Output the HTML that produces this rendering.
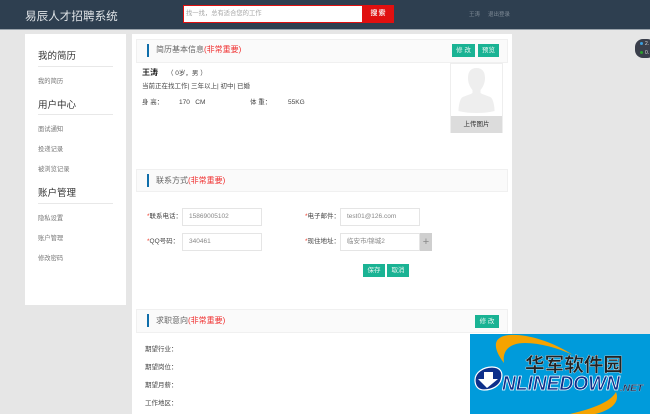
<!DOCTYPE html>
<html lang="zh"><head><meta charset="utf-8"><title>易辰人才招聘系统</title>
<style>
html,body{margin:0;padding:0;background:#e6e6e6}
body{width:650px;height:414px;overflow:hidden;position:relative;font-family:"Liberation Sans","Noto Sans CJK SC",sans-serif;color:#333}
#w{position:absolute;left:0;top:0;width:650px;height:414px;overflow:hidden;background:#e6e6e6;filter:blur(.3px)}
.a{position:absolute;white-space:nowrap}
.t{position:absolute;white-space:nowrap;line-height:12px}
.nav{font-size:6.3px;color:#777;left:38px}
.h{font-size:9.5px;color:#333;left:38px;line-height:14px}
.ln{position:absolute;left:38px;width:75px;height:1px;background:#e8e8e8}
.sec{position:absolute;left:136px;width:370px;background:#fafafa;border:1px solid #f0f0f0}
.bar{position:absolute;left:146.5px;width:2.5px;background:#0f6eaa}
.st{position:absolute;left:156px;font-size:8px;color:#666;white-space:nowrap;line-height:12px}
.st b{font-weight:normal;color:#f03030}
.btn{position:absolute;background:#1ab394;color:#e8f5f0;font-size:6.5px;text-align:center;line-height:13px;height:13px}
.lab{font-size:6.5px;color:#444}
.lab i{font-style:normal;color:#f04030}
.inp{position:absolute;box-sizing:border-box;width:80px;background:#fff;border:1px solid #e5e5e5;font-size:6.5px;color:#888;padding-left:6px;height:18px;line-height:16px;white-space:nowrap}
</style></head><body><div id="w">
<div class="a" style="left:0;top:0;width:650px;height:29px;background:#2e3f50;border-bottom:1px solid #9aa3ab"></div>
<div class="t" style="left:25px;top:9px;font-size:11.6px;line-height:15px;color:#dfe3e6">易辰人才招聘系统</div>
<div class="a" style="left:183px;top:5px;width:180px;height:18px;box-sizing:border-box;background:#fff;border:1.5px solid #e01010;font-size:6.3px;line-height:15px;color:#a5a5a5;padding-left:2px">找一找，总有适合您的工作</div>
<div class="a" style="left:363px;top:5px;width:31px;height:18px;background:#e01010;color:#f6e5e5;font-size:7px;line-height:18px;text-align:center;font-weight:bold;letter-spacing:1px">搜索</div>
<div class="t" style="left:469px;top:9px;font-size:5.5px;color:#7f8b96">王涛</div>
<div class="t" style="left:488px;top:9px;font-size:5.5px;color:#7f8b96">退出登录</div>

<!-- side pill -->
<div class="a" style="left:635px;top:39px;width:20px;height:19px;background:#3a3f4b;border-radius:8px"></div>
<div class="a" style="left:640px;top:42px;width:3px;height:3px;border-radius:2px;background:#3aa0e0"></div>
<div class="a" style="left:640px;top:51px;width:3px;height:3px;border-radius:2px;background:#2ca02c"></div>
<div class="t" style="left:645px;top:38px;font-size:5px;color:#ddd">2.</div>
<div class="t" style="left:645px;top:47px;font-size:5px;color:#ddd">0.</div>

<!-- sidebar -->
<div class="a" style="left:25px;top:34px;width:101px;height:271px;background:#fff"></div>
<div class="t h" style="top:50px">我的简历</div><div class="ln" style="top:66px"></div>
<div class="t nav" style="top:76px">我的简历</div>
<div class="t h" style="top:99px">用户中心</div><div class="ln" style="top:114px"></div>
<div class="t nav" style="top:124px">面试通知</div>
<div class="t nav" style="top:144px">投递记录</div>
<div class="t nav" style="top:164px">被浏览记录</div>
<div class="t h" style="top:187px">账户管理</div><div class="ln" style="top:203px"></div>
<div class="t nav" style="top:213px">隐私设置</div>
<div class="t nav" style="top:233px">账户管理</div>
<div class="t nav" style="top:253px">修改密码</div>

<!-- main -->
<div class="a" style="left:132px;top:34px;width:380px;height:380px;background:#fff"></div>

<div class="sec" style="top:39px;height:22px"></div>
<div class="bar" style="top:44px;height:13px"></div>
<div class="st" style="top:44px">简历基本信息<b>(非常重要)</b></div>
<div class="btn" style="left:452px;top:44px;width:23px">修 改</div>
<div class="btn" style="left:478px;top:44px;width:21px">预览</div>

<div class="t" style="left:142px;top:67px;font-size:8px;font-weight:bold;color:#222">王涛</div>
<div class="t" style="left:167px;top:68px;font-size:6.5px;color:#444">（ 0岁，男 ）</div>
<div class="t" style="left:142px;top:81px;font-size:6.5px;color:#444">当前正在找工作| 三年以上| 初中| 已婚</div>
<div class="t" style="left:142px;top:97px;font-size:6.5px;color:#444">身 高：</div>
<div class="t" style="left:179px;top:97px;font-size:6.5px;color:#444">170 &nbsp; CM</div>
<div class="t" style="left:250px;top:97px;font-size:6.5px;color:#444">体 重：</div>
<div class="t" style="left:288px;top:97px;font-size:6.5px;color:#444">55KG</div>

<!-- photo -->
<div class="a" style="left:450px;top:63px;width:53px;height:70px;box-sizing:border-box;border:1px solid #eee;background:#fff"></div>
<svg class="a" style="left:450px;top:63px" width="53" height="54" viewBox="0 0 53 54">
<path fill="#eeeeee" d="M26.5 5c-6 0-8.500 4-8.500 10 0 5 2 9 4.500 12v3c-3 2-9 3-11 5-2 3-3 8-3 13 6 1.500 12 2 18 2s12-.5 18-2c0-5-1-10-3-13-2-2-8-3-11-5v-3c2.500-3 4.500-7 4.500-12 0-6-2.500-10-8.500-10z"/>
</svg>
<div class="a" style="left:451px;top:116px;width:51px;height:17px;background:#dcdcdc;color:#333;font-size:6.5px;line-height:17px;text-align:center">上传图片</div>

<!-- contact -->
<div class="sec" style="top:169px;height:21px"></div>
<div class="bar" style="top:174px;height:13px"></div>
<div class="st" style="top:175px">联系方式<b>(非常重要)</b></div>

<div class="t lab" style="left:147px;top:211px"><i>*</i>联系电话：</div>
<div class="inp" style="left:182px;top:208px">15869005102</div>
<div class="t lab" style="left:147px;top:236px"><i>*</i>QQ号码：</div>
<div class="inp" style="left:182px;top:233px">340461</div>
<div class="t lab" style="left:305px;top:211px"><i>*</i>电子邮件：</div>
<div class="inp" style="left:340px;top:208px">test01@126.com</div>
<div class="t lab" style="left:305px;top:236px"><i>*</i>现住地址：</div>
<div class="inp" style="left:340px;top:233px">临安市/锦城2</div>
<div class="a" style="left:420px;top:233px;width:12px;height:18px;background:#cfcfcf;color:#888;font-size:11px;line-height:18px;text-align:center">+</div>
<div class="btn" style="left:363px;top:264px;width:22px">保存</div>
<div class="btn" style="left:387px;top:264px;width:22px">取消</div>

<!-- intent -->
<div class="sec" style="top:309px;height:22px"></div>
<div class="bar" style="top:314px;height:13px"></div>
<div class="st" style="top:315px">求职意向<b>(非常重要)</b></div>
<div class="btn" style="left:475px;top:315px;width:24px">修 改</div>
<div class="t lab" style="left:145px;top:344px">期望行业：</div>
<div class="t lab" style="left:145px;top:362px">期望岗位：</div>
<div class="t lab" style="left:145px;top:380px">期望月薪：</div>
<div class="t lab" style="left:145px;top:398px">工作地区：</div>

<!-- watermark -->
<svg class="a" style="left:470px;top:334px" width="180" height="80" viewBox="0 0 180 80">
<rect width="180" height="80" fill="#009bdb"/>
<path fill="#f5a300" d="M103 21C80 6 55 0 40 1 24 2 21 12 34 29 32 16 40 9 55 9 70 9 88 14 103 21z"/>
<path fill="#f5a300" d="M146 58C150 68 142 76 125 80L100 80C125 74 140 68 146 58z"/>
<path fill="#0d2f8a" stroke="#fff" stroke-width="1.2" d="M5 46c0-8 9-13 17-13s11 5 9.500 11.500C30 52 22 56 14 56 8 56 5 52 5 46z"/>
<path fill="#fff" d="M14 38h9v7h5L17 54 8 45h6z"/>
<text x="55" y="37" font-family="'Liberation Sans','Noto Sans CJK SC',sans-serif" font-size="19" font-weight="bold" fill="#222" stroke="#fff" stroke-width=".3" textLength="98" lengthAdjust="spacingAndGlyphs">华军软件园</text>
<text x="32" y="56" font-family="'Liberation Sans',sans-serif" font-size="20" font-weight="bold" font-style="italic" fill="#0d2f8a" stroke="#fff" stroke-width=".7" textLength="118" lengthAdjust="spacingAndGlyphs">NLINEDOWN</text>
<text x="150" y="57" font-family="'Liberation Sans',sans-serif" font-size="9" font-weight="bold" font-style="italic" fill="#1a2a55" stroke="#ddd" stroke-width=".2" textLength="23" lengthAdjust="spacingAndGlyphs">.NET</text>
</svg>
</div></body></html>
